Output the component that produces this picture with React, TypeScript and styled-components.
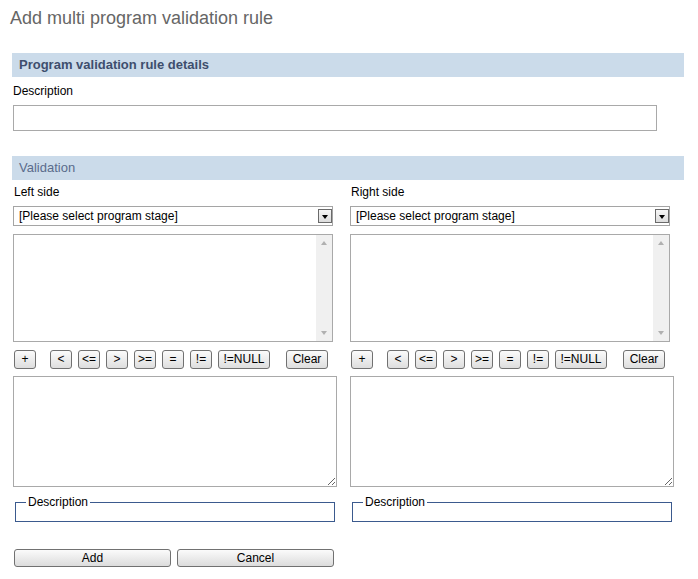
import React from 'react';
import styled, { createGlobalStyle } from 'styled-components';

const GlobalStyle = createGlobalStyle`
  body {
    margin: 0;
    background: #fff;
    font-family: "Liberation Sans", Arial, sans-serif;
    font-size: 12px;
    color: #000;
  }
`;

const Page = styled.div`
  padding: 7px 0 20px 10px;
`;

const Title = styled.h1`
  margin: 0;
  font-size: 18px;
  line-height: 22px;
  font-weight: normal;
  color: #666;
`;

const Section = styled.div<{ $top: number }>`
  margin-left: 2px;
  margin-top: ${(p) => p.$top}px;
  width: 672px;
`;

const SectionHeader = styled.div<{ $bold?: boolean }>`
  height: 24px;
  line-height: 24px;
  padding-left: 7px;
  background: #cbdbea;
  font-size: 13px;
  font-weight: ${(p) => (p.$bold ? 'bold' : 'normal')};
  color: ${(p) => (p.$bold ? '#3e4e6d' : '#5a6b8c')};
`;

const Label = styled.div<{ $top: number }>`
  margin-top: ${(p) => p.$top}px;
  padding-left: 1px;
  line-height: 14px;
`;

const TextInput = styled.input`
  display: block;
  box-sizing: border-box;
  margin: 7px 0 0 1px;
  width: 644px;
  height: 26px;
  border: 1px solid #a9a9a9;
  padding: 2px 4px;
  font: inherit;
`;

const Columns = styled.div`
  display: grid;
  grid-template-columns: 324px 324px;
  column-gap: 13px;
  padding-left: 1px;
`;

const Column = styled.div`
  display: flex;
  flex-direction: column;
`;

const SelectBox = styled.div`
  box-sizing: border-box;
  margin-top: 7px;
  width: 320px;
  height: 20px;
  border: 1px solid #a5a5a5;
  display: flex;
  align-items: center;
  justify-content: space-between;
  padding: 0 0 0 5px;
  background: #fff;
`;

const SelectText = styled.span`
  line-height: 14px;
`;

const ArrowBox = styled.span`
  box-sizing: border-box;
  width: 14px;
  height: 14px;
  border: 1px solid #6a6a6a;
  background: linear-gradient(#f6f6f6, #dcdcdc);
  display: flex;
  align-items: center;
  justify-content: center;
  &::after {
    content: '';
    margin-top: 2px;
    border-left: 3px solid transparent;
    border-right: 3px solid transparent;
    border-top: 4px solid #000;
  }
`;

const ListBox = styled.div`
  box-sizing: border-box;
  margin-top: 8px;
  width: 320px;
  height: 108px;
  border: 1px solid #a9a9a9;
  display: flex;
  justify-content: flex-end;
`;

const ScrollTrack = styled.div`
  width: 16px;
  height: 100%;
  background: #f0f0f0;
  display: flex;
  flex-direction: column;
  align-items: center;
  justify-content: space-between;
  padding: 6px 0;
  box-sizing: border-box;
`;

const ScrollArrow = styled.span<{ $down?: boolean }>`
  border-left: 3px solid transparent;
  border-right: 3px solid transparent;
  ${(p) => (p.$down ? 'border-top: 4px solid #b0b0b0;' : 'border-bottom: 4px solid #b0b0b0;')}
`;

const ButtonRow = styled.div`
  margin-top: 8px;
  display: flex;
  align-items: flex-start;
  padding-left: 1px;
  height: 19px;
`;

const OpButton = styled.button<{ $w: number; $gap: number }>`
  box-sizing: border-box;
  width: ${(p) => p.$w}px;
  height: 19px;
  margin: 0 0 0 ${(p) => p.$gap}px;
  padding: 0;
  border: 1px solid #717171;
  border-radius: 3px;
  background: linear-gradient(#fbfbfb, #dedede);
  font-family: "Liberation Sans", Arial, sans-serif;
  font-size: 12px;
  line-height: 17px;
  color: #000;
`;

const TextArea = styled.textarea`
  display: block;
  box-sizing: border-box;
  margin-top: 7px;
  width: 324px;
  height: 111px;
  border: 1px solid #a9a9a9;
  resize: both;
  font: inherit;
`;

const FieldSet = styled.fieldset`
  margin: 8px 0 0 2px;
  width: 320px;
  box-sizing: border-box;
  padding: 0 10px 12px;
  border: 1px solid #3b5a8e;
  min-inline-size: 0;
`;

const Legend = styled.legend`
  padding: 0 2px;
  line-height: 14px;
  font-size: 12px;
`;

const Actions = styled.div`
  margin: 27px 0 0 2px;
  display: flex;
  gap: 6px;
`;

const ActionButton = styled.button`
  box-sizing: border-box;
  width: 157px;
  height: 18px;
  padding: 0;
  border: 1px solid #717171;
  border-radius: 3px;
  background: linear-gradient(#fbfbfb, #dcdcdc);
  font-family: "Liberation Sans", Arial, sans-serif;
  font-size: 12px;
  line-height: 16px;
  color: #000;
`;

const ops: { label: string; w: number; gap: number }[] = [
  { label: '+', w: 22, gap: 0 },
  { label: '<', w: 22, gap: 14 },
  { label: '<=', w: 22, gap: 6 },
  { label: '>', w: 22, gap: 6 },
  { label: '>=', w: 22, gap: 6 },
  { label: '=', w: 22, gap: 6 },
  { label: '!=', w: 22, gap: 6 },
  { label: '!=NULL', w: 52, gap: 6 },
  { label: 'Clear', w: 42, gap: 16 },
];

function Side({ title }: { title: string }) {
  return (
    <Column>
      <Label $top={5}>{title}</Label>
      <SelectBox>
        <SelectText>[Please select program stage]</SelectText>
        <ArrowBox />
      </SelectBox>
      <ListBox>
        <ScrollTrack>
          <ScrollArrow />
          <ScrollArrow $down />
        </ScrollTrack>
      </ListBox>
      <ButtonRow>
        {ops.map((o) => (
          <OpButton key={o.label} $w={o.w} $gap={o.gap} type="button">
            {o.label}
          </OpButton>
        ))}
      </ButtonRow>
      <TextArea />
      <FieldSet>
        <Legend>Description</Legend>
      </FieldSet>
    </Column>
  );
}

export default function App() {
  return (
    <Page>
      <GlobalStyle />
      <Title>Add multi program validation rule</Title>
      <Section $top={24}>
        <SectionHeader $bold>Program validation rule details</SectionHeader>
        <Label $top={7}>Description</Label>
        <TextInput type="text" />
      </Section>
      <Section $top={25}>
        <SectionHeader>Validation</SectionHeader>
        <Columns>
          <Side title="Left side" />
          <Side title="Right side" />
        </Columns>
        <Actions>
          <ActionButton type="button">Add</ActionButton>
          <ActionButton type="button">Cancel</ActionButton>
        </Actions>
      </Section>
    </Page>
  );
}
